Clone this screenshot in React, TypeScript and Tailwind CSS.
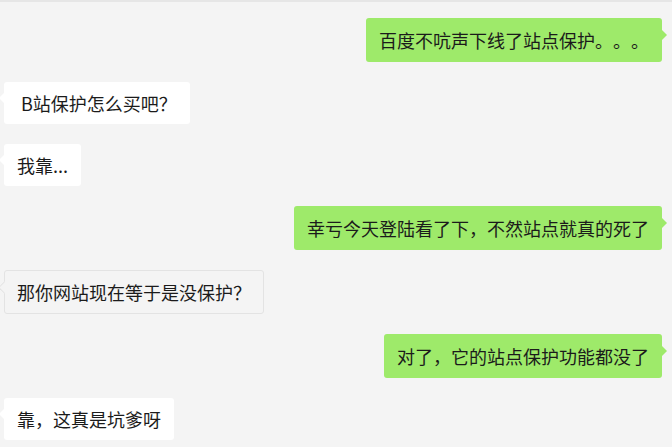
import React from 'react';

type Msg = { side: 'left' | 'right'; text: string; muted?: boolean };

const messages: Msg[] = [
  { side: 'right', text: '百度不吭声下线了站点保护。。。' },
  { side: 'left', text: '\u00a0B站保护怎么买吧？' },
  { side: 'left', text: '我靠...' },
  { side: 'right', text: '幸亏今天登陆看了下，不然站点就真的死了' },
  { side: 'left', text: '那你网站现在等于是没保护？', muted: true },
  { side: 'right', text: '对了，它的站点保护功能都没了' },
  { side: 'left', text: '靠，这真是坑爹呀' },
];

const Bubble: React.FC<{ msg: Msg }> = ({ msg }) => {
  if (msg.side === 'right') {
    return (
      <div className="flex justify-end pr-[10px]">
        <div className="relative bg-[#9eea6a] rounded-[3px] px-[13px] py-[10px] text-[18px] leading-[24px] text-[#1b1b1b]">
          {msg.text}
          <div className="absolute top-[12px] -right-[5px] w-0 h-0 border-y-[5px] border-y-transparent border-l-[5px] border-l-[#9eea6a]"></div>
        </div>
      </div>
    );
  }
  return (
    <div className="flex justify-start pl-[4px]">
      <div
        className={
          msg.muted
            ? 'relative bg-[#f4f4f4] border border-[#e3e3e3] rounded-[3px] px-[12px] py-[9px] text-[18px] leading-[24px] text-[#1b1b1b]'
            : 'relative bg-white rounded-[3px] px-[13px] py-[9px] text-[18px] leading-[24px] text-[#1b1b1b]'
        }
      >
        {msg.text}
        {msg.muted ? (
          <div className="absolute top-[12px] -left-[5px] w-[9px] h-[9px] rotate-45 bg-[#f4f4f4] border-l border-b border-[#e3e3e3]"></div>
        ) : (
          <div className="absolute top-[11px] -left-[5px] w-0 h-0 border-y-[5px] border-y-transparent border-r-[5px] border-r-white"></div>
        )}
      </div>
    </div>
  );
};

export default function App() {
  return (
    <div
      className="w-[672px] h-[447px] overflow-hidden bg-[#f4f4f4] border-t-2 border-[#e6e6e6] [text-spacing-trim:space-all]"
      style={{ fontFamily: '"Noto Sans CJK SC", "Noto Sans", sans-serif' }}
    >
      <div className="flex flex-col gap-[20px] pt-[16px]">
        {messages.map((m, i) => (
          <Bubble key={i} msg={m} />
        ))}
      </div>
    </div>
  );
}
